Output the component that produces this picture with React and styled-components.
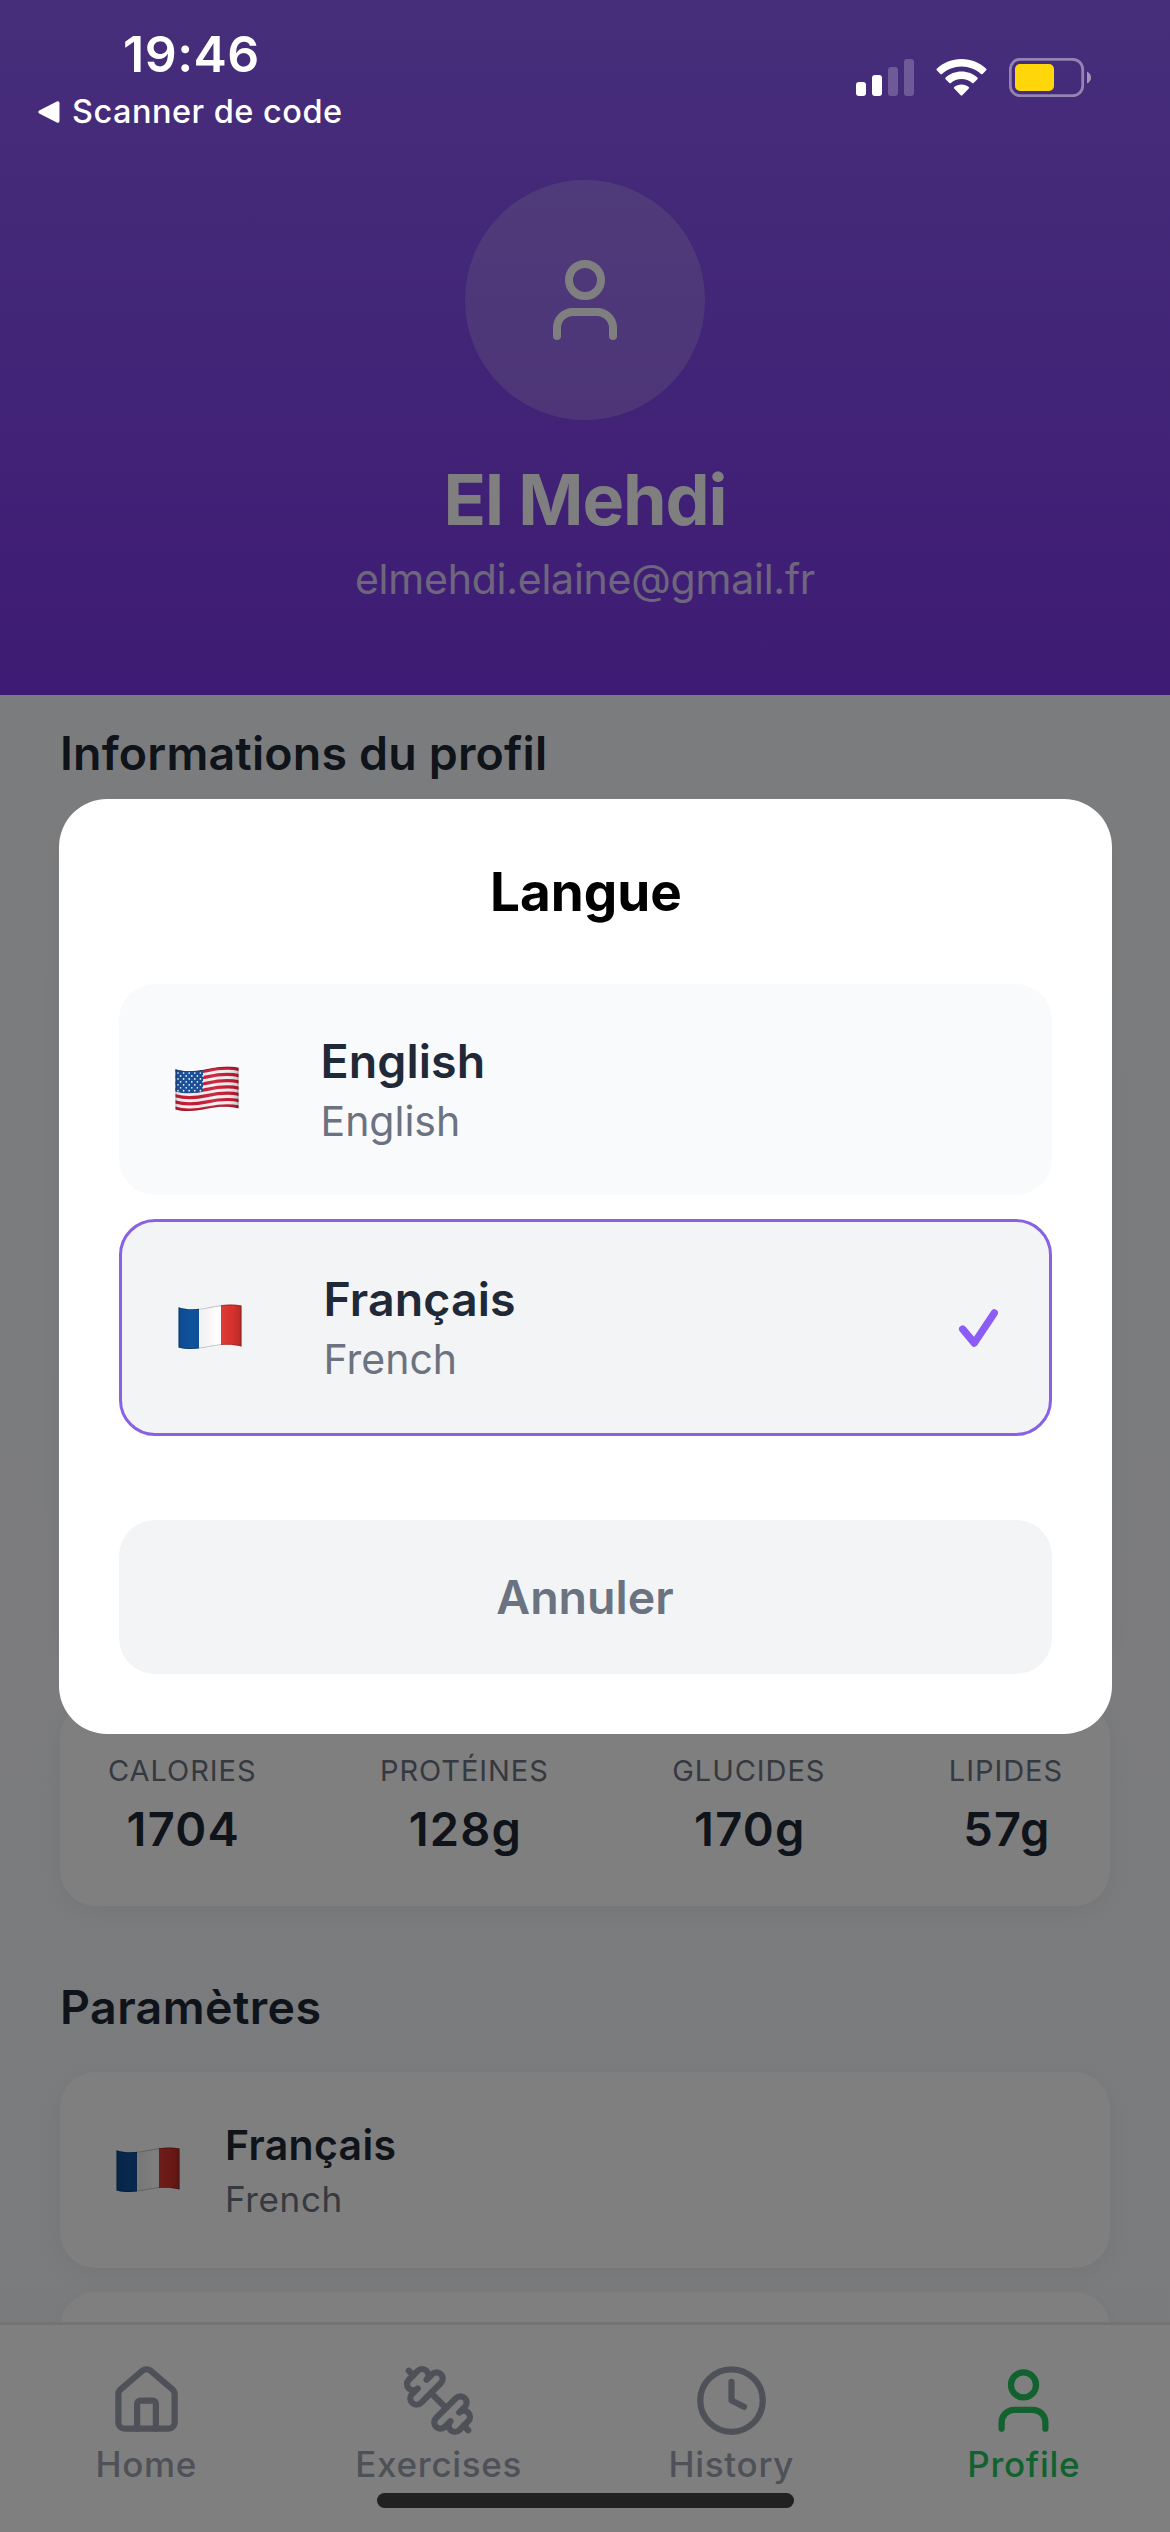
import React from "react";
import styled, { createGlobalStyle } from "styled-components";

const GlobalStyle = createGlobalStyle`
  * { box-sizing: border-box; }
  body {
    margin: 0;
    font-family: Inter, "Liberation Sans", sans-serif;
    -webkit-font-smoothing: antialiased;
  }
  button { font-family: inherit; }
`;

const Screen = styled.div`
  position: relative;
  display: flex;
  flex-direction: column;
  width: 1170px;
  height: 2532px;
  overflow: hidden;
  background: linear-gradient(#f8f9fb, #f5f7fa);
`;

/* ---------- status bar ---------- */

const StatusBar = styled.div`
  position: absolute;
  inset: 0 0 auto 0;
  display: flex;
  justify-content: space-between;
  height: 140px;
  padding: 24px 79px 0 38px;
  color: #fff;
`;

const StatusLeft = styled.div`
  display: flex;
  flex-direction: column;
  gap: 7px;
`;

const Clock = styled.div`
  padding-left: 85px;
  font-size: 50px;
  font-weight: 600;
  line-height: 60px;
  letter-spacing: 0.5px;
`;

const BackLink = styled.div`
  display: flex;
  align-items: center;
  gap: 12px;
  font-size: 32.5px;
  font-weight: 500;
  line-height: 41px;
  letter-spacing: 0.48px;
`;

const StatusRight = styled.div`
  display: flex;
  align-items: flex-start;
  gap: 22px;
  padding-top: 34px;
`;

/* ---------- profile header ---------- */

const Header = styled.header`
  display: flex;
  flex-direction: column;
  align-items: center;
  flex: none;
  height: 695px;
  padding-top: 180px;
  background: linear-gradient(#8d5df6, #7c37e8);
`;

const Avatar = styled.div`
  display: grid;
  place-items: center;
  width: 240px;
  height: 240px;
  border-radius: 50%;
  background: rgba(255, 255, 255, 0.2);
  color: #fff;
`;

const Name = styled.h1`
  margin: 38px 0 13px;
  color: #fff;
  font-size: 70px;
  font-weight: 700;
  line-height: 84px;
  letter-spacing: -1.1px;
`;

const Email = styled.div`
  color: rgba(255, 255, 255, 0.8);
  font-size: 41px;
  line-height: 48px;
  letter-spacing: -0.24px;
  opacity: 0.95;
`;

/* ---------- content ---------- */

const Content = styled.main`
  display: flex;
  flex-direction: column;
  flex: 1;
  min-height: 0;
  overflow: hidden;
  padding: 29px 60px 0;
`;

const SectionTitle = styled.h2`
  flex: none;
  margin: 0 0 36px;
  color: #1f2937;
  font-size: 46.5px;
  font-weight: 600;
  line-height: 58px;
  letter-spacing: ${(p) => p.$tracking}px;
`;

const Card = styled.div`
  flex: none;
  display: flex;
  height: ${(p) => p.$height}px;
  margin-bottom: ${(p) => p.$gap}px;
  border-radius: 36px;
  background: #fff;
  box-shadow: 0 6px 24px rgba(0, 0, 0, 0.05);
`;

const StatsCard = styled(Card)`
  justify-content: space-between;
  padding: 50px 47px 0 48px;
`;

const Stat = styled.div`
  display: flex;
  flex-direction: column;
  align-items: center;
  gap: 11px;
`;

const StatLabel = styled.div`
  color: #6b7280;
  font-size: 29px;
  line-height: 37px;
  letter-spacing: 0.95px;
`;

const StatValue = styled.div`
  padding-left: 2px;
  color: #1f2937;
  font-size: 47px;
  font-weight: 600;
  line-height: 58px;
  letter-spacing: 1.2px;
`;

const SettingCard = styled(Card)`
  align-items: center;
  padding: 0 56px;
  gap: 45px;
`;

const SettingName = styled.div`
  margin-bottom: 8px;
  color: #1f2937;
  font-size: 41px;
  font-weight: 600;
  line-height: 50px;
  letter-spacing: 0.32px;
`;

const SettingHint = styled.div`
  color: #6b7280;
  font-size: 35px;
  line-height: 42px;
  letter-spacing: 0.64px;
`;

/* ---------- tab bar ---------- */

const TabBar = styled.nav`
  display: grid;
  grid-template-columns: repeat(4, 1fr);
  flex: none;
  height: 210px;
  padding-top: 38px;
  border-top: 3px solid #e5e7eb;
  background: #fff;
`;

const Tab = styled.div`
  display: flex;
  flex-direction: column;
  align-items: center;
  gap: 5px;
  color: ${(p) => (p.$active ? "#22c55e" : "#9ca3af")};
  font-size: 35px;
  font-weight: 500;
  line-height: 42px;
  letter-spacing: 0.7px;
`;

/* ---------- modal ---------- */

const Overlay = styled.div`
  position: absolute;
  inset: 0;
  display: flex;
  align-items: center;
  justify-content: center;
  background: rgba(0, 0, 0, 0.5);
`;

const Dialog = styled.div`
  display: flex;
  flex-direction: column;
  width: 1053px;
  padding: 60px;
  border-radius: 48px;
  background: #fff;
`;

const DialogTitle = styled.h2`
  margin: 0 0 59px;
  padding-left: 2px;
  color: #000;
  font-size: 53px;
  font-weight: 700;
  line-height: 66px;
  letter-spacing: 0;
  text-align: center;
`;

const Options = styled.div`
  display: flex;
  flex-direction: column;
  gap: 24px;
  margin-bottom: 84px;
`;

const Option = styled.div`
  display: flex;
  align-items: center;
  height: ${(p) => (p.$selected ? 217 : 211)}px;
  padding: 0 51px 0 56px;
  border: ${(p) => (p.$selected ? "3px solid #8861e4" : "none")};
  border-radius: 36px;
  background: ${(p) => (p.$selected ? "#f3f4f6" : "#f9fafb")};
`;

const OptionText = styled.div`
  display: flex;
  flex-direction: column;
  flex: 1;
  gap: 6px;
  margin-left: 82px;
`;

const OptionName = styled.div`
  color: #1f2937;
  font-size: 46.5px;
  font-weight: 600;
  line-height: 58px;
  letter-spacing: 0.1px;
`;

const OptionHint = styled.div`
  color: #6b7280;
  font-size: 41px;
  line-height: 50px;
`;

const CancelButton = styled.button`
  height: 154px;
  padding: 0;
  border: 0;
  border-radius: 36px;
  background: #f3f4f6;
  color: #6b7280;
  font-size: 46.5px;
  font-weight: 600;
`;

const HomeIndicator = styled.div`
  position: absolute;
  left: 377px;
  bottom: 24px;
  width: 417px;
  height: 15px;
  border-radius: 8px;
  background: #212121;
`;

const FlagSvg = styled.svg`
  display: block;
  flex: none;
  margin-bottom: 1px;
`;

/* ---------- drawings ---------- */

const WAVE_SHAPE =
  "M0.5 3.2 C10 6.2 20 5.6 32 3 C43 0.6 54 -0.6 63.5 1.6 L63.5 42.6 C54 40 44 40.4 33 42.6 C21 45.4 10 46 0.5 43.6 Z";

function Flag({ id, country }) {
  const stripes = Array.from({ length: 13 }, (_, i) => 1.6 + i * 3.13);
  const stars = [];
  for (let r = 0; r < 7; r++)
    for (let c = 0; c < 5; c++)
      stars.push([3 + c * 5.6 + (r % 2 ? 2.6 : 0), 7 + r * 2.95]);
  return (
    <FlagSvg width="64" height="46" viewBox="0 0 64 46">
      <defs>
        <clipPath id={id}>
          <path d={WAVE_SHAPE} />
        </clipPath>
        <linearGradient id={`${id}-shade`} x1="0" y1="0" x2="1" y2="0">
          <stop offset="0" stopColor="#000" stopOpacity="0.1" />
          <stop offset="0.2" stopColor="#000" stopOpacity="0" />
          <stop offset="0.38" stopColor="#000" stopOpacity="0.05" />
          <stop offset="0.6" stopColor="#fff" stopOpacity="0.08" />
          <stop offset="0.85" stopColor="#000" stopOpacity="0.04" />
          <stop offset="1" stopColor="#000" stopOpacity="0.2" />
        </linearGradient>
      </defs>
      <g clipPath={`url(#${id})`}>
        {country === "fr" ? (
          <>
            <rect width="21.2" height="46" fill="#0f529c" />
            <rect x="21" width="22.2" height="46" fill="#fff" />
            <rect x="43" width="21" height="46" fill="#e0342f" />
          </>
        ) : (
          <>
            <rect width="64" height="46" fill="#f7f3f5" />
            {stripes.map((y, i) =>
              i % 2 === 0 ? (
                <path
                  key={i}
                  transform={`translate(0 ${y})`}
                  d="M-1 2.7 C10 6.2 20 5.6 32 3 C43 0.6 54 -0.6 65 1.9"
                  fill="none"
                  stroke="#c81d35"
                  strokeWidth="3.2"
                />
              ) : null
            )}
            <path d="M0 0 H28 V25.6 C20 27.6 10 28 0 25.4 Z" fill="#1c529b" />
            {stars.map(([x, y], i) => (
              <circle key={i} cx={x} cy={y} r="0.85" fill="#fff" />
            ))}
          </>
        )}
        <rect width="64" height="46" fill={`url(#${id}-shade)`} />
        <path d={WAVE_SHAPE} fill="none" stroke="#000" strokeOpacity="0.22" strokeWidth="2" />
      </g>
    </FlagSvg>
  );
}

function StrokeIcon({ size, children }) {
  return (
    <svg
      width={size}
      height={size}
      viewBox="0 0 24 24"
      fill="none"
      stroke="currentColor"
      strokeWidth="2"
      strokeLinecap="round"
      strokeLinejoin="round"
    >
      {children}
    </svg>
  );
}

const UserIcon = ({ size }) => (
  <StrokeIcon size={size}>
    <path d="M19 21v-2a4 4 0 0 0-4-4H9a4 4 0 0 0-4 4v2" />
    <circle cx="12" cy="7" r="4" />
  </StrokeIcon>
);

const HomeIcon = ({ size }) => (
  <StrokeIcon size={size}>
    <path d="M15 21v-8a1 1 0 0 0-1-1h-4a1 1 0 0 0-1 1v8" />
    <path d="M3 10a2 2 0 0 1 .709-1.528l7-5.999a2 2 0 0 1 2.582 0l7 5.999A2 2 0 0 1 21 10v9a2 2 0 0 1-2 2H5a2 2 0 0 1-2-2z" />
  </StrokeIcon>
);

const DumbbellIcon = ({ size }) => (
  <StrokeIcon size={size}>
    <path d="M14.4 14.4 9.6 9.6" />
    <path d="M18.657 21.485a2 2 0 1 1-2.829-2.828l-1.767 1.768a2 2 0 1 1-2.829-2.829l6.364-6.364a2 2 0 1 1 2.829 2.829l-1.768 1.767a2 2 0 1 1 2.828 2.829z" />
    <path d="m21.5 21.5-1.4-1.4" />
    <path d="M3.9 3.9 2.5 2.5" />
    <path d="M6.404 12.768a2 2 0 1 1-2.829-2.829l1.768-1.767a2 2 0 1 1-2.828-2.829l2.828-2.828a2 2 0 1 1 2.829 2.828l1.767-1.768a2 2 0 1 1 2.829 2.829z" />
  </StrokeIcon>
);

const ClockIcon = ({ size }) => (
  <StrokeIcon size={size}>
    <circle cx="12" cy="12" r="10" />
    <path d="M12 6v6l4 2" />
  </StrokeIcon>
);

const BackArrow = () => (
  <svg width="22" height="22" viewBox="0 0 22 22" fill="#fff">
    <path d="M1.2 9.4 18.8 0.5Q21.5-.4 21.5 2.2V19.8Q21.5 22.4 18.8 21.5L1.2 12.6Q-.6 11 1.2 9.4Z" />
  </svg>
);

const SignalIcon = () => (
  <svg width="58" height="38" viewBox="0 0 58 38" fill="#fff">
    <rect x="0" y="24" width="10" height="14" rx="3" />
    <rect x="16" y="17" width="10" height="21" rx="3" />
    <rect x="32" y="9" width="10" height="29" rx="3" opacity="0.22" />
    <rect x="48" y="1" width="10" height="37" rx="3" opacity="0.22" />
  </svg>
);

const WifiIcon = () => (
  <svg width="51" height="38" viewBox="0 0 51 38" fill="#fff">
    <path d="M25.5 1C35 1 43.600 4.600 50.200 10.700Q51 11.500 50.200 12.300L46.600 16Q45.800 16.700 45 16C39.700 11.300 32.900 8.500 25.500 8.500S11.300 11.300 6 16Q5.200 16.700 4.400 16L.8 12.300Q0 11.500 .8 10.700C7.400 4.600 16 1 25.500 1Z" />
    <path d="M25.500 13.500C31.600 13.500 37.200 15.800 41.400 19.600Q42.200 20.400 41.400 21.200L37.600 25Q36.900 25.700 36.100 25C33.300 22.500 29.600 21 25.500 21S17.700 22.500 14.900 25Q14.100 25.700 13.400 25L9.600 21.200Q8.800 20.400 9.600 19.600C13.800 15.800 19.400 13.500 25.500 13.500Z" />
    <path d="M25.500 26.500C28.300 26.500 30.800 27.400 32.800 29Q33.600 29.800 32.800 30.600L26.300 37.300Q25.500 38 24.700 37.300L18.200 30.600Q17.400 29.800 18.200 29C20.200 27.400 22.700 26.500 25.500 26.500Z" />
  </svg>
);

const BatteryIcon = () => (
  <svg width="82" height="39" viewBox="0 0 82 39">
    <rect x="1.300" y="1.300" width="72.400" height="36.400" rx="10" fill="none" stroke="#fff" strokeOpacity="0.42" strokeWidth="2.800" />
    <rect x="6" y="6" width="39" height="27" rx="5" fill="#ffd60a" />
    <path d="M78 13.500Q82 15.500 82 19.500T78 25.500Z" fill="#fff" fillOpacity="0.5" />
  </svg>
);

const CheckIcon = () => (
  <svg width="40" height="40" viewBox="0 0 40 40" fill="none" stroke="#8b5cf6" strokeWidth="7.400" strokeLinecap="round" strokeLinejoin="round">
    <path d="M4.700 22.200 16.300 36 36.300 6" />
  </svg>
);

const STATS = [
  ["CALORIES", "1704"],
  ["PROTÉINES", "128g"],
  ["GLUCIDES", "170g"],
  ["LIPIDES", "57g"],
];

const TABS = [
  ["Home", HomeIcon],
  ["Exercises", DumbbellIcon],
  ["History", ClockIcon],
  ["Profile", UserIcon],
];

const LANGUAGES = [
  { code: "us", name: "English", hint: "English" },
  { code: "fr", name: "Français", hint: "French" },
];

export default function App() {
  const selected = "fr";
  return (
    <>
      <GlobalStyle />
      <Screen>
        <Header>
          <Avatar>
            <UserIcon size={96} />
          </Avatar>
          <Name>El Mehdi</Name>
          <Email>elmehdi.elaine@gmail.fr</Email>
        </Header>
        <Content>
          <SectionTitle $tracking={0.18}>Informations du profil</SectionTitle>
          <Card $height={844} $gap={40} />
          <StatsCard $height={204} $gap={72}>
            {STATS.map(([label, value]) => (
              <Stat key={label}>
                <StatLabel>{label}</StatLabel>
                <StatValue>{value}</StatValue>
              </Stat>
            ))}
          </StatsCard>
          <SectionTitle $tracking={0.42}>Paramètres</SectionTitle>
          <SettingCard $height={196} $gap={24}>
            <Flag id="setting-fr" country="fr" />
            <div>
              <SettingName>Français</SettingName>
              <SettingHint>French</SettingHint>
            </div>
          </SettingCard>
          <Card $height={196} $gap={0} />
        </Content>
        <TabBar>
          {TABS.map(([label, Icon]) => (
            <Tab key={label} $active={label === "Profile"}>
              <Icon size={75} />
              {label}
            </Tab>
          ))}
        </TabBar>

        <Overlay>
          <Dialog>
            <DialogTitle>Langue</DialogTitle>
            <Options>
              {LANGUAGES.map((l) => (
                <Option key={l.code} $selected={l.code === selected}>
                  <Flag id={`option-${l.code}`} country={l.code} />
                  <OptionText>
                    <OptionName>{l.name}</OptionName>
                    <OptionHint>{l.hint}</OptionHint>
                  </OptionText>
                  {l.code === selected && <CheckIcon />}
                </Option>
              ))}
            </Options>
            <CancelButton>Annuler</CancelButton>
          </Dialog>
        </Overlay>

        <StatusBar>
          <StatusLeft>
            <Clock>19:46</Clock>
            <BackLink>
              <BackArrow />
              Scanner de code
            </BackLink>
          </StatusLeft>
          <StatusRight>
            <SignalIcon />
            <WifiIcon />
            <BatteryIcon />
          </StatusRight>
        </StatusBar>
        <HomeIndicator />
      </Screen>
    </>
  );
}
